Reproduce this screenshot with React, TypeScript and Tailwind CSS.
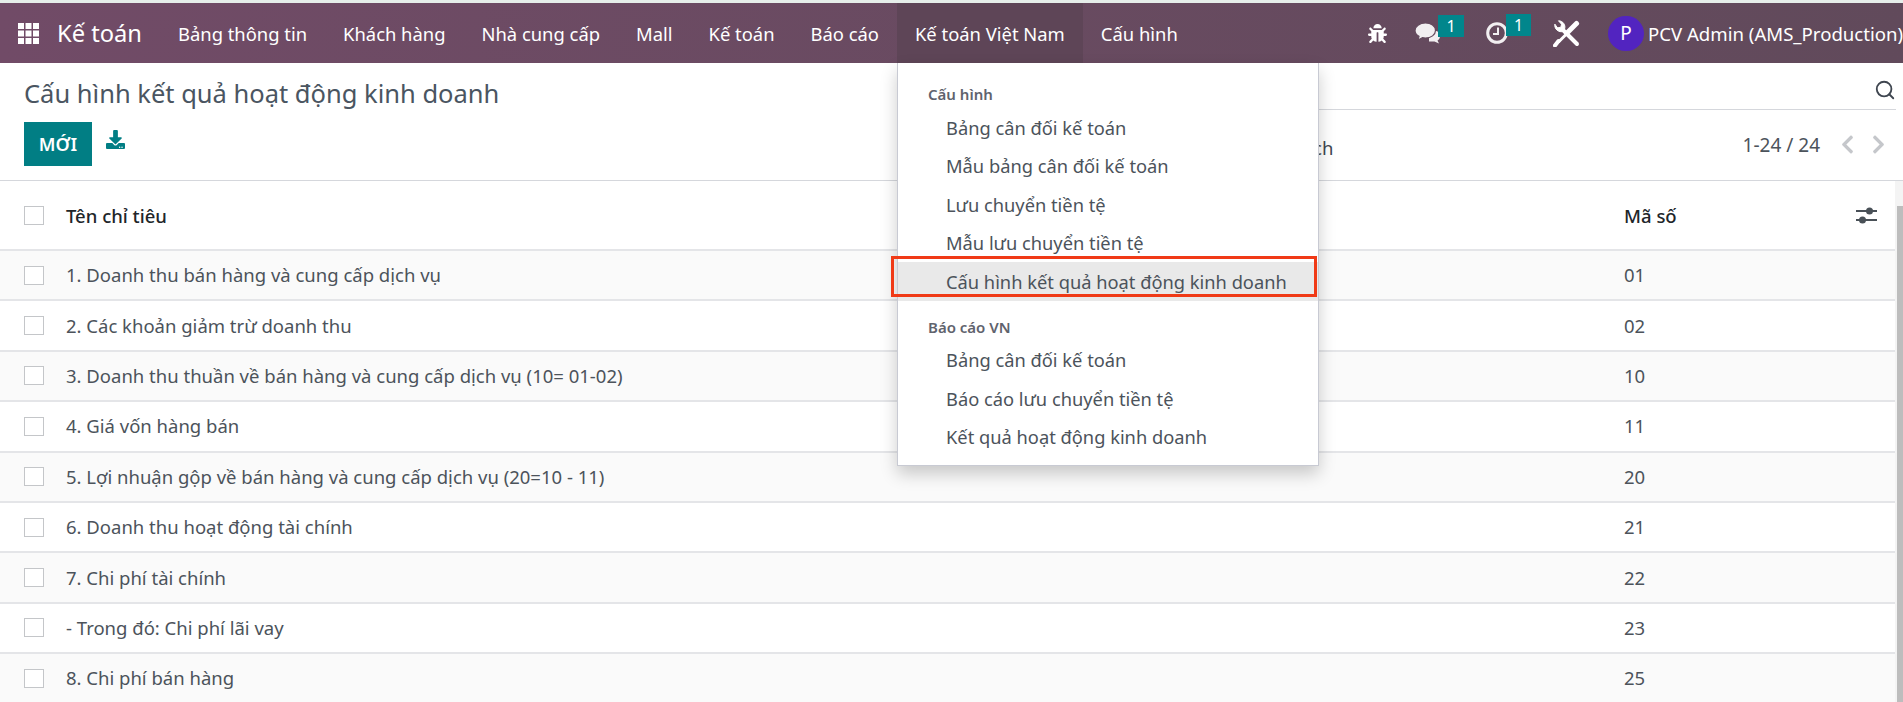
import { FaBug, FaChevronLeft, FaChevronRight, FaDownload } from "react-icons/fa";
import { Search } from "lucide-react";

const navItems = ["Bảng thông tin", "Khách hàng", "Nhà cung cấp", "Mall", "Kế toán", "Báo cáo", "Kế toán Việt Nam", "Cấu hình"];

const rows = [
  ["1. Doanh thu bán hàng và cung cấp dịch vụ", "01"],
  ["2. Các khoản giảm trừ doanh thu", "02"],
  ["3. Doanh thu thuần về bán hàng và cung cấp dịch vụ (10= 01-02)", "10"],
  ["4. Giá vốn hàng bán", "11"],
  ["5. Lợi nhuận gộp về bán hàng và cung cấp dịch vụ (20=10 - 11)", "20"],
  ["6. Doanh thu hoạt động tài chính", "21"],
  ["7. Chi phí tài chính", "22"],
  ["- Trong đó: Chi phí lãi vay", "23"],
  ["8. Chi phí bán hàng", "25"],
];

function Checkbox() {
  return <span className="block h-[19px] w-5 shrink-0 border border-[#c4c6c9] bg-white" />;
}

function AppsIcon() {
  return (
    <svg width="21" height="21" viewBox="0 0 21 21" fill="white">
      {[0, 7.5, 15].map((x) =>
        [0, 7.5, 15].map((y) => <rect key={`${x}-${y}`} x={x} y={y} width="6" height="6" />)
      )}
    </svg>
  );
}

function CommentsIcon() {
  return (
    <svg width="26" height="21" viewBox="0 0 26 21" fill="#f2eff1">
      <path d="M14 8h6c3 0 5 2 5 5 0 2-1 3.500-2.500 4.500l1.500 3-4.500-2H14z" />
      <path d="M10.500 0C16 0 20.500 3.200 20.500 7.500S16 15 10.500 15c-1 0-2-.1-3-.3L3 17l1-3.700C1.500 12 0 10 0 7.500 0 3.200 4.700 0 10.500 0z" stroke="#634a5d" strokeWidth="1.200" />
    </svg>
  );
}

function ClockIcon() {
  return (
    <svg width="22" height="22" viewBox="0 0 22 22" fill="none" stroke="#f2eff1">
      <circle cx="11" cy="11" r="9.300" strokeWidth="3" />
      <path d="M12 5.500v6.500H7" strokeWidth="2" />
    </svg>
  );
}

function ToolsIcon() {
  return (
    <svg width="27" height="27" viewBox="0 0 27 27" fill="none" stroke="white" strokeLinecap="round">
      <path d="M9 9l15 15" strokeWidth="4" />
      <path d="M1.800 4.500a6.300 6.300 0 0 0 8.500 6.800l1.200-2A6.300 6.300 0 0 0 5.500.800l3 3.400-.6 3-3 .6z" fill="white" strokeWidth="1" />
      <path d="M23.500 3.500L14.500 12.500" strokeWidth="5" />
      <path d="M13 14.500L6 21.500" strokeWidth="3" />
      <path d="M5.500 21L2 25.500" strokeWidth="4" />
    </svg>
  );
}

function SlidersIcon() {
  return (
    <svg width="21" height="17" viewBox="0 0 21 17" fill="#495057" stroke="#495057">
      <path d="M0 4h21M0 13h21" strokeWidth="1.800" />
      <circle cx="13.500" cy="4" r="3.500" strokeWidth="0" />
      <circle cx="6.500" cy="13" r="3.500" strokeWidth="0" />
    </svg>
  );
}

function MenuItem({ label, active }: { label: string; active?: boolean }) {
  return (
    <div className={`flex h-[38.5px] items-center pl-[48px] text-[18.3px] ${active ? "bg-[#e9e9e9]" : ""}`}>
      {label}
    </div>
  );
}

export default function App() {
  return (
    <div className="relative h-[702px] w-full overflow-hidden bg-white font-['Noto_Sans','Open_Sans',sans-serif] text-[18.5px] text-[#4c535b]">
      <div className="h-[3px] bg-[#e6eeea]" />

      {/* navbar */}
      <header className="flex h-[60px] items-center bg-gradient-to-r from-[#714b67] to-[#614a5b] text-[18.4px] text-white">
        <div className="ml-[18px] mr-[18px] flex">
          <AppsIcon />
        </div>
        <span className="mr-[18px] pt-[2px] text-[23.700px]">Kế toán</span>
        <nav className="flex h-full">
          {navItems.map((item) => (
            <span
              key={item}
              className={`flex h-full items-center px-[18px] pt-[2px] ${item === "Kế toán Việt Nam" ? "bg-[#5e4557]" : ""}`}
            >
              {item}
            </span>
          ))}
        </nav>
        <div className="ml-auto flex shrink-0 items-center">
          <FaBug size={19} />
          <span className="relative ml-[28px] flex">
            <CommentsIcon />
            <span className="absolute left-[23px] top-[-8px] flex h-[22px] w-[26px] items-center justify-center bg-[#01868c] text-[16px] text-white">1</span>
          </span>
          <span className="relative ml-[45px] flex">
            <ClockIcon />
            <span className="absolute left-[20px] top-[-8px] flex h-[22px] w-[25px] items-center justify-center bg-[#01868c] text-[16px] text-white">1</span>
          </span>
          <span className="ml-[45px] flex">
            <ToolsIcon />
          </span>
          <span className="ml-[28px] flex h-[35px] w-[36px] items-center justify-center rounded-full bg-[#5224c0] text-[19px]">
            P
          </span>
          <span className="ml-[4px] w-[255px] overflow-hidden whitespace-nowrap pt-[2px] text-[18.6px]">PCV Admin (AMS_Production)</span>
        </div>
      </header>

      {/* control panel */}
      <section className="flex h-[118px] justify-between border-b border-[#d5d7dc] pl-6 pr-[7px]">
        <div>
          <h1 className="mt-[14px] text-[25.500px] leading-[32px] text-[#4a5561]">Cấu hình kết quả hoạt động kinh doanh</h1>
          <div className="mt-[13px] flex items-center">
            <button className="h-[44px] w-[68px] bg-[#017e84] text-[18px] font-semibold text-white">MỚI</button>
            <FaDownload size={19} className="mb-[9px] ml-[14px] text-[#017e84]" />
          </div>
        </div>
        <div className="w-[900px]">
          <div className="mt-[14px] flex h-[33px] items-center justify-end border-b border-[#d5d7dc]">
            <Search size={22} className="mb-[6px] text-[#3f4650]" strokeWidth={2} />
          </div>
          <div className="flex items-center pt-[18px]">
            <span className="ml-[258px] mt-[6px] text-[#3f4650]">Yêu thích</span>
            <span className="ml-auto text-[19px] leading-[26px]">1-24 / 24</span>
            <FaChevronLeft size={21} className="ml-[17px] text-[#c5c7cb]" />
            <FaChevronRight size={21} className="ml-[10px] mr-[7px] text-[#c5c7cb]" />
          </div>
        </div>
      </section>

      {/* list */}
      <div className="flex">
        <div className="min-w-0 flex-1">
          <div className="flex h-[70px] items-center border-b-2 border-[#e4e5e8] pl-6 font-medium text-[#212529]">
            <Checkbox />
            <span className="ml-[22px] pt-[2px]">Tên chỉ tiêu</span>
            <span className="ml-auto w-[232px] pt-[2px]">Mã số</span>
            <span className="mr-[18px] flex">
              <SlidersIcon />
            </span>
          </div>
          {rows.map(([name, code], i) => (
            <div
              key={code}
              className={`flex h-[50.4px] items-center border-b-2 border-[#e4e5e8] pl-6 ${i % 2 === 0 ? "bg-[#fafafa]" : "bg-white"}`}
            >
              <Checkbox />
              <span className="ml-[22px]">{name}</span>
              <span className="ml-auto w-[271px]">{code}</span>
            </div>
          ))}
        </div>
        <div className="relative w-2 shrink-0 bg-[#f4f4f4]">
          <div className="absolute bottom-0 left-[2px] right-0 top-[25px] bg-[#bdbdbd]" />
        </div>
      </div>

      {/* dropdown */}
      <div className="absolute left-[897px] top-[63px] h-[403px] w-[422px] border border-t-0 border-[#c8cad3] bg-white shadow-[0_8px_16px_rgba(0,0,0,0.2)]">
        <div className="pl-[30px] pt-[21px] text-[15px] font-semibold leading-[20px] text-[#5f636d]">Cấu hình</div>
        <div className="mt-[4px]">
          <MenuItem label="Bảng cân đối kế toán" />
          <MenuItem label="Mẫu bảng cân đối kế toán" />
          <MenuItem label="Lưu chuyển tiền tệ" />
          <MenuItem label="Mẫu lưu chuyển tiền tệ" />
          <MenuItem label="Cấu hình kết quả hoạt động kinh doanh" active />
        </div>
        <div className="pl-[30px] pt-[16px] text-[15px] font-semibold leading-[20px] text-[#5f636d]">Báo cáo VN</div>
        <div className="mt-[4px]">
          <MenuItem label="Bảng cân đối kế toán" />
          <MenuItem label="Báo cáo lưu chuyển tiền tệ" />
          <MenuItem label="Kết quả hoạt động kinh doanh" />
        </div>
      </div>

      {/* red annotation */}
      <div className="absolute left-[891px] top-[256px] h-[41px] w-[426px] border-[3px] border-[#f03a17]" />
    </div>
  );
}
